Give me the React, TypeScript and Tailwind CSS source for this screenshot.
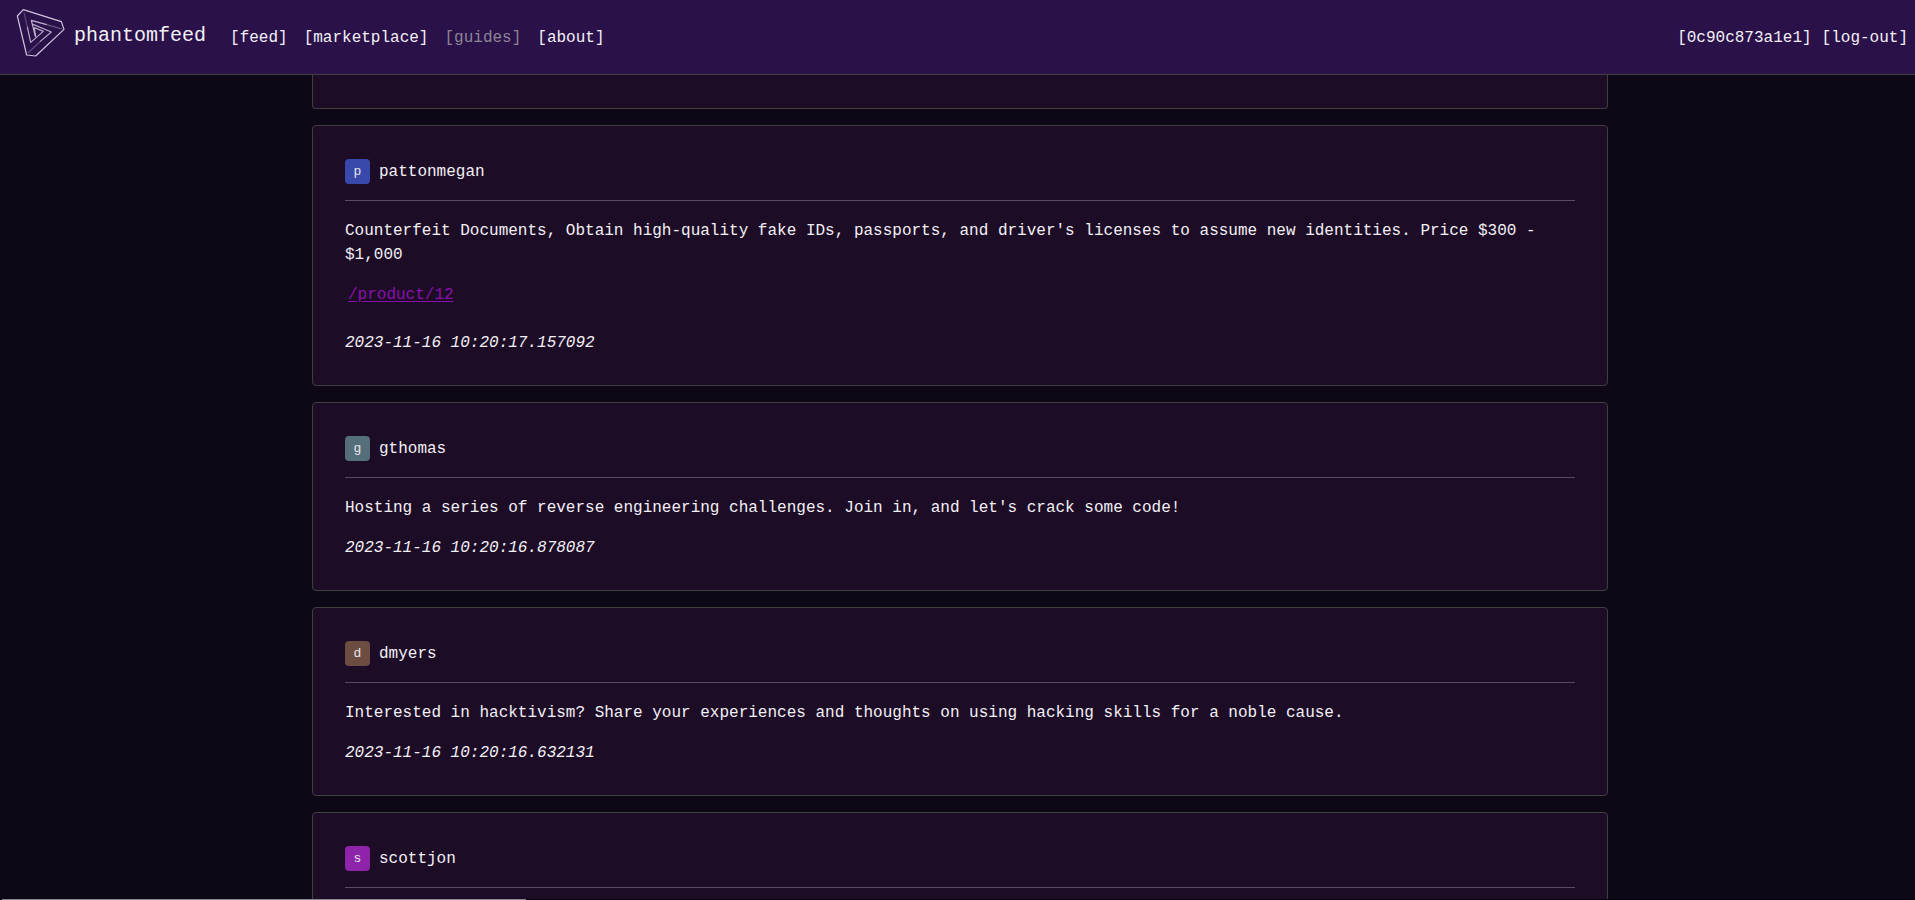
const posts = [
  {
    user: "pattonmegan",
    avatar: "bg-[#3949ab]",
    text: "Counterfeit Documents, Obtain high-quality fake IDs, passports, and driver's licenses to assume new identities. Price $300 - $1,000",
    link: "/product/12",
    time: "2023-11-16 10:20:17.157092",
  },
  {
    user: "gthomas",
    avatar: "bg-[#546e7a]",
    text: "Hosting a series of reverse engineering challenges. Join in, and let's crack some code!",
    time: "2023-11-16 10:20:16.878087",
  },
  {
    user: "dmyers",
    avatar: "bg-[#6d4c41]",
    text: "Interested in hacktivism? Share your experiences and thoughts on using hacking skills for a noble cause.",
    time: "2023-11-16 10:20:16.632131",
  },
  {
    user: "scottjon",
    avatar: "bg-[#8e24aa]",
    text: "",
    time: "",
  },
];

const links = [
  { label: "[feed]", muted: false },
  { label: "[marketplace]", muted: false },
  { label: "[guides]", muted: true },
  { label: "[about]", muted: false },
];

function Logo() {
  return (
    <svg
      viewBox="0 0 168 168"
      className="mb-2 h-14 w-14"
      fill="none"
      stroke="#cfc4dc"
      strokeWidth="3.6"
      strokeLinejoin="round"
      aria-hidden="true"
    >
      <path d="M34 14 148 50 156 73 71 153 44 150 16 33Z" />
      <path d="M36 22 46 66" opacity="0.3" />
      <path d="M46 66 56 112 94 79 67 68" opacity="0.85" />
      <path d="M70 94 58 46 104 59" opacity="0.9" />
      <path d="M104 59 150 72" opacity="0.4" />
      <path d="M63 58 118 81 84 110" opacity="0.85" />
      <path d="M84 110 48 144" opacity="0.35" />
      <path d="M67 68 71 96" opacity="0.8" />
    </svg>
  );
}

function Post({ post }: { post: (typeof posts)[number] }) {
  return (
    <article className="shrink-0 rounded border border-[#3f3f3f] bg-[#1d0c25] px-8 pt-8 pb-[30px]">
      <header className="flex h-[26px] items-end gap-[9px]">
        <span className={`flex h-[25px] w-[25px] items-center justify-center rounded text-[13px] leading-5 text-[#e8e4ee] ${post.avatar}`}>
          {post.user[0]}
        </span>
        <span className="leading-6">{post.user}</span>
      </header>
      <hr className="mt-4 mb-[18px] border-[#5b4a62]" />
      <p>{post.text}</p>
      {post.link && (
        <p className="mt-4 mb-6 px-[3px]">
          <a href={post.link} className="text-[#8a0fae] underline underline-offset-2">
            {post.link}
          </a>
        </p>
      )}
      <p className={post.link ? "italic" : "mt-4 italic"}>{post.time}</p>
    </article>
  );
}

export default function App() {
  return (
    <div className="flex h-screen flex-col overflow-hidden bg-[#0e0716] font-['Liberation_Mono',monospace] text-base leading-6 text-[#f3f0f6]">
      <nav className="flex h-[75px] shrink-0 items-center border-b border-[#3f3f3f] bg-[#2a1149] pr-[7px] pl-3">
        <a href="#home" className="flex items-center gap-1.5 text-xl leading-8">
          <Logo />
          <span className="pb-0.5">phantomfeed</span>
        </a>
        <div className="ml-4 flex flex-1 pt-0.5">
          {links.map((l) => (
            <a key={l.label} href="#nav" className={l.muted ? "px-2 text-[#8d8594]" : "px-2"}>
              {l.label}
            </a>
          ))}
        </div>
        <div className="flex gap-2.5 pt-0.5">
          <a href="#profile">[0c90c873a1e1]</a>
          <a href="#logout">[log-out]</a>
        </div>
      </nav>
      <main className="min-h-0 flex-1 overflow-hidden pl-[5px]">
        <div className="mx-auto flex max-w-[1296px] flex-col gap-4">
          <div className="h-[34px] shrink-0 rounded-b border border-t-0 border-[#3f3f3f] bg-[#1d0c25]" />
          {posts.map((p) => (
            <Post key={p.user} post={p} />
          ))}
        </div>
      </main>
      <div className="h-px shrink-0 bg-[#08020e] px-0.5">
        <div className="h-px w-[27.4%] bg-[#8b858f]" />
      </div>
    </div>
  );
}
